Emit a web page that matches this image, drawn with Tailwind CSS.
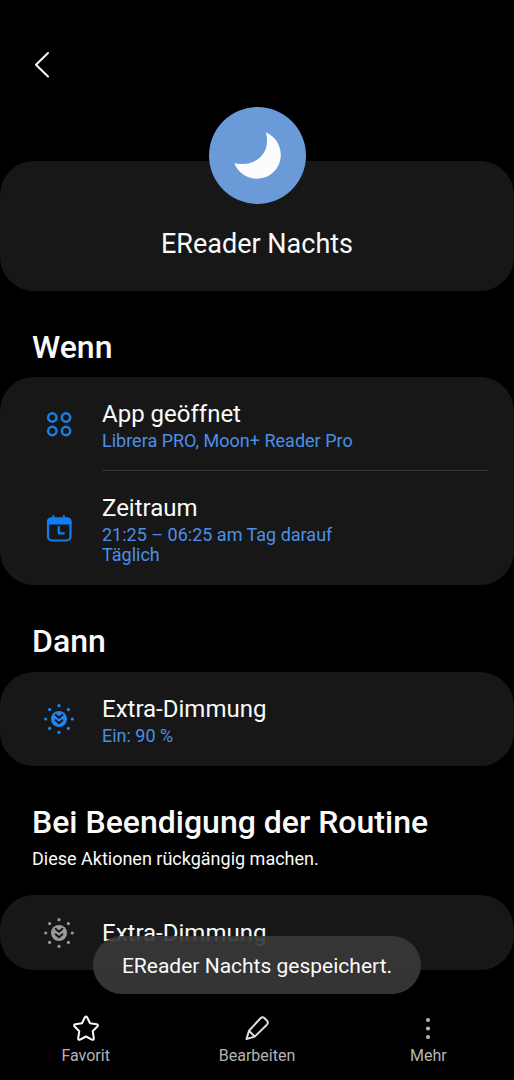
<!DOCTYPE html>
<html lang="de">
<head>
<meta charset="utf-8">
<meta name="viewport" content="width=device-width, initial-scale=1">
<title>EReader Nachts</title>
<script src="https://cdn.jsdelivr.net/npm/@tailwindcss/browser@4"></script>
</head>
<body class="bg-black text-[#fafafa] font-['Roboto','Noto_Sans',sans-serif]">
<svg class="hidden" aria-hidden="true">
  <symbol id="dim" viewBox="0 0 32 32">
    <g fill="currentColor">
      <circle cx="16" cy="2.7" r="1.6"/><circle cx="16" cy="29.3" r="1.6"/><circle cx="2.7" cy="16" r="1.6"/><circle cx="29.3" cy="16" r="1.6"/>
      <circle cx="6.6" cy="6.6" r="1.6"/><circle cx="25.4" cy="6.6" r="1.6"/><circle cx="6.6" cy="25.4" r="1.6"/><circle cx="25.4" cy="25.4" r="1.6"/>
      <circle cx="16" cy="16" r="8"/>
    </g>
    <path d="M12.6 11.8 16 14.7l3.4-2.9M12.6 17.3 16 20.2l3.4-2.9" fill="none" stroke="#171717" stroke-width="2" stroke-linecap="round" stroke-linejoin="round"/>
  </symbol>
</svg>
<div class="flex min-h-screen flex-col">
  <header class="px-5 pt-[42px]">
    <button type="button" aria-label="Zurück" class="flex size-11 items-center justify-center">
      <svg class="size-8" viewBox="0 0 32 32" fill="none" stroke="currentColor" stroke-width="2" stroke-linecap="round" stroke-linejoin="round"><path d="M22 5 10 16.800 22 28.500"/></svg>
    </button>
  </header>

  <main class="flex-1">
    <section class="mt-[75px] flex h-[130px] flex-col items-center rounded-[34px] bg-[#171717]">
      <div class="-mt-[54px] flex size-[97px] shrink-0 items-center justify-center rounded-full bg-[#6a9ad8]">
        <svg class="size-[97px]" viewBox="0 0 97 97" fill="#fcfcfc"><path d="M57 25.2C75 33.5 76.500 56.500 62 67.300C49.500 76 31.500 71.500 25.300 56.200C46.500 60.500 62.500 46.500 57 25.200Z"/></svg>
      </div>
      <h1 class="mt-6 text-[27px] leading-8">EReader Nachts</h1>
    </section>

    <section>
      <h2 class="mt-9 px-8 text-[32px] leading-10 font-medium">Wenn</h2>
      <ul class="mt-[10px] rounded-[34px] bg-[#171717]">
        <li class="flex items-center pr-[26px] pl-[43px]">
          <svg class="mr-[27px] size-8 shrink-0 text-[#1c7ee0]" viewBox="0 0 32 32" fill="none" stroke="currentColor" stroke-width="2.5"><circle cx="9.300" cy="9.500" r="4.200"/><circle cx="23" cy="9.500" r="4.200"/><circle cx="9.300" cy="23" r="4.200"/><circle cx="23" cy="23" r="4.200"/></svg>
          <div class="flex-1 border-b border-[#343434] pt-5 pb-[19px]">
            <h3 class="text-2xl leading-[34px]">App geöffnet</h3>
            <p class="text-lg leading-5 text-[#4c8fe8]">Librera PRO, Moon+ Reader Pro</p>
          </div>
        </li>
        <li class="flex items-center pr-[26px] pl-[43px]">
          <svg class="mr-[27px] size-8 shrink-0 text-[#0e7ff5]" viewBox="0 0 32 32" fill="none" stroke="currentColor"><rect x="5" y="6.500" width="22.500" height="22" rx="4" stroke-width="2.200"/><path d="M4 12.500V9.500a4 4 0 0 1 4-4h16.500a4 4 0 0 1 4 4v3Z" fill="currentColor" stroke="none"/><path d="M10.300 4v3M21 4v3" stroke-width="2" stroke-linecap="round"/><path d="M15.800 15v6.300h5" stroke-width="2.200" stroke-linecap="round" stroke-linejoin="round"/></svg>
          <div class="flex-1 py-5">
            <h3 class="text-2xl leading-[34px]">Zeitraum</h3>
            <p class="text-lg leading-5 text-[#4c8fe8]">21:25 – 06:25 am Tag darauf<br>Täglich</p>
          </div>
        </li>
      </ul>
    </section>

    <section>
      <h2 class="mt-9 px-8 text-[32px] leading-10 font-medium">Dann</h2>
      <ul class="mt-[11px] rounded-[34px] bg-[#171717]">
        <li class="flex items-center pr-[26px] pl-[43px]">
          <svg class="mr-[27px] size-8 shrink-0 text-[#1e86f5]"><use href="#dim"/></svg>
          <div class="flex-1 py-5">
            <h3 class="text-2xl leading-[34px]">Extra-Dimmung</h3>
            <p class="text-lg leading-5 text-[#4c8fe8]">Ein: 90 %</p>
          </div>
        </li>
      </ul>
    </section>

    <section>
      <h2 class="mt-9 px-8 text-[32px] leading-10 font-medium">Bei Beendigung der Routine</h2>
      <p class="mt-[7px] px-8 text-lg leading-5">Diese Aktionen rückgängig machen.</p>
      <ul class="mt-[26px] rounded-[34px] bg-[#171717]">
        <li class="flex items-center pr-[26px] pl-[43px]">
          <svg class="mr-[27px] size-8 shrink-0 text-[#9a9a9a]"><use href="#dim"/></svg>
          <h3 class="flex-1 pt-[21px] pb-5 text-2xl leading-[34px]">Extra-Dimmung</h3>
        </li>
      </ul>
    </section>
  </main>

  <nav class="sticky bottom-0 grid h-[110px] grid-cols-3 bg-black pt-[43px] text-base leading-5 text-[#b4b4b4]">
    <div role="status" class="absolute -top-[34px] left-1/2 -translate-x-1/2 rounded-full bg-[#383838]/92 px-[29px] pt-4 pb-3.5 text-[21px] leading-7 whitespace-nowrap text-[#fafafa]">EReader Nachts gespeichert.</div>
    <button type="button" class="flex flex-col items-center gap-[3px]">
      <svg class="size-[30px] text-[#fafafa]" viewBox="0 0 30 30" fill="none" stroke="currentColor" stroke-width="2" stroke-linejoin="round"><path d="M13.900 4.300Q15 2.500 16.100 4.300L19 10.300 25.600 11.300Q27.700 11.900 26.400 13.500L21.700 18.200 22.800 25.200Q22.900 27.300 20.900 26.600L15 23.500 9.100 26.600Q7.100 27.300 7.200 25.200L8.300 18.200 3.600 13.500Q2.300 11.900 4.400 11.300L11 10.300Z"/></svg>
      Favorit
    </button>
    <button type="button" class="flex flex-col items-center gap-[3px]">
      <svg class="size-[30px] text-[#dedede]" viewBox="0 0 30 30" fill="none" stroke="currentColor" stroke-width="2" stroke-linejoin="round" stroke-linecap="round"><path d="M4.500 26 7 17.700 18.500 5.300Q20.500 3.300 22.600 5.200L25 7.700Q26.700 9.700 24.900 11.700L12.700 23.600ZM7 17.700 12.700 23.600"/></svg>
      Bearbeiten
    </button>
    <button type="button" class="flex flex-col items-center gap-[3px]">
      <svg class="size-[30px]" viewBox="0 0 30 30" fill="currentColor"><circle cx="15" cy="7" r="2.100"/><circle cx="15" cy="15.500" r="2.100"/><circle cx="15" cy="24" r="2.100"/></svg>
      Mehr
    </button>
  </nav>
</div>
</body>
</html>
